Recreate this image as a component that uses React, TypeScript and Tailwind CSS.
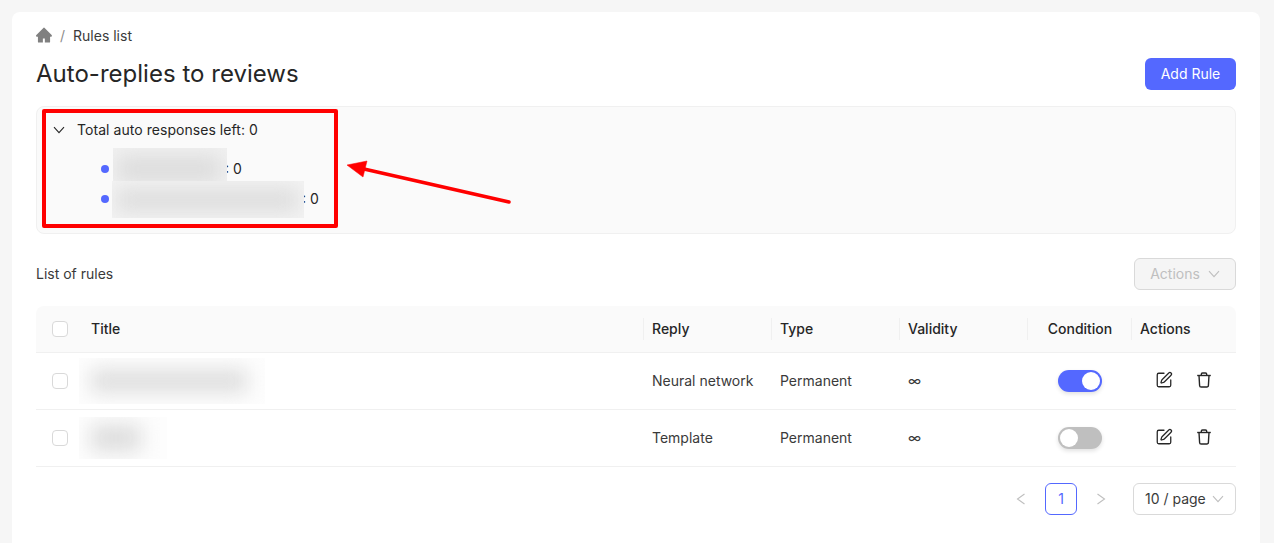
import { AiFillHome } from "react-icons/ai";
import { SquarePen } from "lucide-react";

const Check = () => (
  <span className="block h-4 w-4 rounded-[4px] border border-[#d9d9d9] bg-white" />
);

const ChevronDown = ({ className }: { className?: string }) => (
  <svg className={className} width="12" height="8" viewBox="0 0 12 8" fill="none">
    <path d="M1 1.2 L6 6.6 L11 1.2" stroke="currentColor" strokeWidth="1.1" />
  </svg>
);

const ChevronSide = ({ flip, className }: { flip?: boolean; className?: string }) => (
  <svg className={className} width="10" height="12" viewBox="0 0 10 12" fill="none">
    <path d={flip ? "M1.5 1 L8.5 6 L1.5 11" : "M8.5 1 L1.5 6 L8.5 11"} stroke="#bfbfbf" strokeWidth="1.1" />
  </svg>
);

const TrashIcon = () => (
  <svg width="16" height="16" viewBox="0 0 16 16" fill="none" stroke="currentColor" strokeWidth="1.4">
    <path d="M5.3 3.5 V2.2 a1.2 1.2 0 0 1 1.2-1.2 h3 a1.2 1.2 0 0 1 1.2 1.2 V3.5" />
    <path d="M1.2 3.5 H14.8" />
    <path d="M3 3.5 L3.6 13.4 a1.6 1.6 0 0 0 1.6 1.6 h5.6 a1.6 1.6 0 0 0 1.6-1.6 L13 3.5" />
  </svg>
);

const HeadCell = ({ label, center }: { label: string; center?: boolean }) => (
  <div className={`relative flex items-center font-medium ${center ? "justify-center pl-[2px]" : "pl-[9px]"}`}>
    <span className="absolute left-0 top-[12px] h-[22px] w-px bg-[#f0f0f0]" />
    {label}
  </div>
);

const Smudge = ({ box, inner }: { box: string; inner: string }) => (
  <div className={`overflow-hidden ${box}`}>
    <div className={`${inner} bg-[#dcdcdc] blur-[10px]`} />
  </div>
);

const Row = ({
  reply,
  on,
  smudge,
}: {
  reply: string;
  on: boolean;
  smudge: React.ReactNode;
}) => (
  <div className="grid h-[57px] grid-cols-[39px_568px_128px_128px_128px_104px_105px] border-b border-[#f0f0f0]">
    <div className="flex items-center pl-4">
      <Check />
    </div>
    <div className="flex items-center pl-[4px]">{smudge}</div>
    <div className="flex items-center pl-[9px] text-[#3a3a3a]">{reply}</div>
    <div className="flex items-center pl-[9px] text-[#3a3a3a]">Permanent</div>
    <div className="flex items-center pl-[9px] text-[#3a3a3a]">∞</div>
    <div className="flex items-center justify-center pl-[2px]">
      <span
        className={`flex h-[22px] w-[44px] items-center rounded-full p-[2px] shadow-[0_2px_4px_rgba(0,0,0,0.12)] ${
          on ? "justify-end bg-[#5468ff]" : "justify-start bg-[#bfbfbf]"
        }`}
      >
        <span className="h-[18px] w-[18px] rounded-full bg-white" />
      </span>
    </div>
    <div className="flex items-center gap-[23px] pb-[2px] pl-[24px] text-[#262626]">
      <SquarePen size={18} strokeWidth={1.7} />
      <TrashIcon />
    </div>
  </div>
);

export default function App() {
  return (
    <div className="h-[543px] overflow-hidden bg-[#f6f6f6] p-3 pr-[14px] font-['Inter',sans-serif] text-sm text-[#262626]">
      <div className="relative h-[560px] rounded-lg bg-white px-6 pt-[14px]">
        <div className="flex h-5 items-center text-[#3a3a3a]">
          <AiFillHome className="-ml-px -mt-[2px] text-[#808080]" size={18} />
          <span className="ml-[7px] text-[#8c8c8c]">/</span>
          <span className="ml-[8px]">Rules list</span>
        </div>

        <div className="mt-[9px] flex items-center justify-between">
          <h1 className="text-[24px] leading-[38px] tracking-[0.02px] text-[#262626]">Auto-replies to reviews</h1>
          <button className="h-8 w-[91px] rounded-md bg-[#5468ff] text-white">Add Rule</button>
        </div>

        <div className="mt-[13px] h-[128px] rounded-lg border border-[#f0f0f0] bg-[#fafafa]">
          <div className="flex items-center pl-4 pt-[13px] leading-5">
            <ChevronDown />
            <span className="ml-3 tracking-[0.05px]">Total auto responses left: 0</span>
          </div>
          <ul className="mt-[14px] pl-[64px]">
            <li className="flex h-[30px] items-center">
              <span className="h-2 w-2 rounded-full bg-[#5468ff]" />
              <div className="z-10 -my-[6px] ml-1">
                <Smudge box="h-[42px] w-[114px] bg-[#f1f1f1]" inner="mx-1 my-2 h-[26px] w-[104px]" />
              </div>
              <span className="-ml-[2px]">: 0</span>
            </li>
            <li className="flex h-[30px] items-center">
              <span className="h-2 w-2 rounded-full bg-[#5468ff]" />
              <div className="z-10 -my-[4px] ml-[3px]">
                <Smudge box="h-[37px] w-[192px] bg-[#f3f3f3]" inner="mx-1 my-2 h-[22px] w-[182px]" />
              </div>
              <span className="-ml-[2px]">: 0</span>
            </li>
          </ul>
        </div>

        <div className="mt-6 flex h-8 items-center justify-between">
          <span className="text-[#3a3a3a]">List of rules</span>
          <button className="flex h-8 w-[102px] items-center justify-center gap-2 rounded-md border border-[#d9d9d9] bg-[#f5f5f5] text-[#bfbfbf]">
            Actions
            <ChevronDown />
          </button>
        </div>

        <div className="mt-4">
          <div className="grid h-[47px] grid-cols-[39px_568px_128px_128px_128px_104px_105px] rounded-t-lg border-b border-[#f0f0f0] bg-[#fafafa]">
            <div className="flex items-center pl-4">
              <Check />
            </div>
            <div className="flex items-center pl-[16px] font-medium">Title</div>
            <HeadCell label="Reply" />
            <HeadCell label="Type" />
            <HeadCell label="Validity" />
            <HeadCell label="Condition" center />
            <HeadCell label="Actions" />
          </div>
          <Row
            reply="Neural network"
            on
            smudge={<Smudge box="h-[46px] w-[186px] bg-[#fdfdfd]" inner="mx-3 my-3 h-[22px] w-[156px]" />}
          />
          <Row
            reply="Template"
            on={false}
            smudge={<Smudge box="h-[42px] w-[88px] bg-[#fdfdfd]" inner="mx-3 my-2 h-[26px] w-[50px]" />}
          />
        </div>

        <div className="mt-4 flex h-8 items-center justify-end text-[#3a3a3a]">
          <ChevronSide />
          <span className="ml-[19px] flex h-8 w-8 items-center justify-center rounded-md border border-[#5468ff] text-[#5468ff]">
            1
          </span>
          <ChevronSide flip className="ml-[19px]" />
          <span className="ml-[27px] flex h-8 w-[103px] items-center justify-between rounded-md border border-[#d9d9d9] px-[11px]">
            10 / page
            <ChevronDown className="text-[#bfbfbf]" />
          </span>
        </div>

        {/* annotation on top of the screenshot */}
        <div className="absolute left-[30px] top-[97px] h-[119px] w-[296px] rounded-[2px] border-[4px] border-[#ff0000]" />
        <svg className="absolute left-[330px] top-[145px]" width="170" height="60" viewBox="0 0 170 60">
          <path d="M167 45 L22 12" stroke="#ff0000" strokeWidth="3.5" strokeLinecap="round" />
          <path d="M5 8 L25 4 L21 20 Z" fill="#ff0000" stroke="#ff0000" strokeWidth="0.5" />
        </svg>
      </div>
    </div>
  );
}
